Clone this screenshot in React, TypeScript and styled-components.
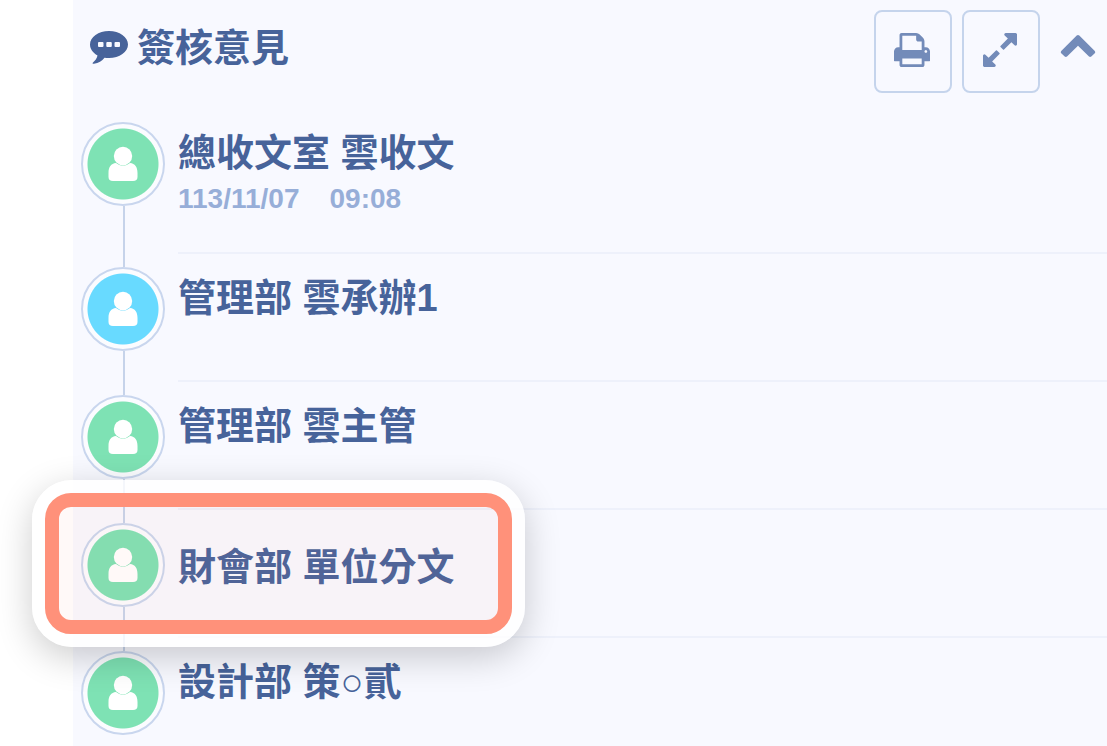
import React from "react";
import styled, { createGlobalStyle } from "styled-components";

const GlobalStyle = createGlobalStyle`
  * { box-sizing: border-box; }
  body {
    margin: 0;
    background: #fff;
    color: #47639a;
    font-family: "Liberation Sans", "Noto Sans CJK TC", sans-serif;
  }
  #root { overflow: hidden; }
`;

const Panel = styled.main`
  margin-left: 73px;
  min-height: 100vh;
  background: #f8f9ff;
`;

const Header = styled.header`
  display: flex;
  align-items: flex-start;
  justify-content: space-between;
  height: 109px;
  padding: 10px 11px 0 16px;
`;

const Title = styled.h1`
  display: flex;
  align-items: center;
  gap: 8px;
  margin: 15px 0 0;
  font-size: 38px;
  line-height: 46px;
  font-weight: 700;
`;

const Actions = styled.div`
  display: flex;
  gap: 10px;
  color: #738bb9;
`;

const IconButton = styled.button`
  display: flex;
  align-items: center;
  justify-content: center;
  width: 78px;
  height: 83px;
  padding: 0 2px 4px 0;
  border: 2px solid #c5d4ec;
  border-radius: 8px;
  background: transparent;
  color: inherit;
`;

const CollapseButton = styled.button`
  display: flex;
  justify-content: center;
  width: 36px;
  height: 74px;
  padding: 24px 0 0;
  margin-left: 10px;
  border: 0;
  background: transparent;
  color: inherit;
`;

const Timeline = styled.ol`
  margin: 0;
  padding: 0 0 0 8px;
  list-style: none;
`;

const Entry = styled.li<{ $tall?: boolean }>`
  position: relative;
  display: flex;
  gap: 13px;
  height: ${(p) => (p.$tall ? 145 : 128)}px;
`;

const Track = styled.div`
  display: flex;
  flex: none;
  flex-direction: column;
  align-items: center;
  width: 84px;
`;

const Connector = styled.span<{ $visible: boolean; $grow?: boolean }>`
  flex: ${(p) => (p.$grow ? "1" : "0 0 13px")};
  width: 2px;
  margin-left: 2px;
  background: ${(p) => (p.$visible ? "#c6d3ea" : "transparent")};
`;

const Avatar = styled.span<{ $color: string }>`
  display: flex;
  flex: none;
  align-items: center;
  justify-content: center;
  width: 84px;
  height: 84px;
  border: 2px solid #c9d6ee;
  border-radius: 50%;
  background: radial-gradient(circle, ${(p) => p.$color} 35px, #fbfcff 36px);
`;

const Details = styled.div<{ $centered?: boolean; $last?: boolean }>`
  flex: 1;
  min-width: 0;
  padding-top: ${(p) => (p.$centered ? 34 : 21)}px;
  border-bottom: 2px solid ${(p) => (p.$last ? "transparent" : "#eef1fb")};
`;

const Name = styled.h2`
  margin: 0;
  font-size: 38px;
  line-height: 46px;
  font-weight: 700;
  white-space: nowrap;
`;

const Stamp = styled.time`
  display: flex;
  gap: 30px;
  color: #97aed8;
  font-size: 28px;
  line-height: 46px;
  font-weight: 700;
`;

const Highlight = styled.div`
  position: absolute;
  z-index: 1;
  top: -30px;
  left: -49px;
  width: 493px;
  height: 167px;
  border: 13px solid rgba(255, 255, 255, 0.8);
  border-radius: 40px;
  box-shadow: 0 10px 36px rgba(0, 0, 0, 0.2);
  pointer-events: none;
`;

const HighlightFrame = styled.div`
  height: 100%;
  border: 14px solid #ff917a;
  border-radius: 26px;
  background: rgba(255, 145, 122, 0.05);
  background-clip: padding-box;
`;

const CommentIcon = () => (
  <svg width="40" height="36" viewBox="0 0 40 36" fill="currentColor" aria-hidden="true">
    <path
      fillRule="evenodd"
      d="M20 1C9.500 1 1 7 1 14.500C1 19 4 23 8.500 25.500C8 28.500 6 30.500 4 32.500C3 33.600 4 34 5 33.800C9.500 33 13 31 15.500 27.700C17 28 18.500 28 20 28C30.500 28 39 22 39 14.500S30.500 1 20 1ZM10 12h3.500q1 0 1 1v3q0 1-1 1H10q-1 0-1-1v-3q0-1 1-1ZM18.300 12h3.500q1 0 1 1v3q0 1-1 1h-3.500q-1 0-1-1v-3q0-1 1-1ZM26.500 12H30q1 0 1 1v3q0 1-1 1h-3.500q-1 0-1-1v-3q0-1 1-1Z"
    />
  </svg>
);

const PrintIcon = () => (
  <svg width="36" height="34" viewBox="0 128 1664 1536" preserveAspectRatio="none" fill="currentColor" aria-hidden="true">
    <path d="M384 1536h896v-256h-896v256zM384 896h896v-384h-160q-40 0-68-28t-28-68v-160h-640v640zM1536 960q0-26-19-45t-45-19-45 19-19 45 19 45 45 19 45-19 19-45zM1664 960v416q0 13-9.500 22.500t-22.500 9.500h-224v160q0 40-28 68t-68 28h-960q-40 0-68-28t-28-68v-160h-224q-13 0-22.500-9.500t-9.500-22.500v-416q0-79 56.500-135.500t135.500-56.500h64v-544q0-40 28-68t68-28h672q40 0 88 20t76 48l152 152q28 28 48 76t20 88v256h64q79 0 135.500 56.500t56.500 135.500z" />
  </svg>
);

const ExpandIcon = () => (
  <svg width="34" height="34" viewBox="0 128 1536 1536" fill="currentColor" aria-hidden="true">
    <path d="M755 1056q0 13-10 23l-332 332 144 144q19 19 19 45t-19 45-45 19h-448q-26 0-45-19t-19-45v-448q0-26 19-45t45-19 45 19l144 144 332-332q10-10 23-10t23 10l114 114q10 10 10 23zM1536 192v448q0 26-19 45t-45 19-45-19l-144-144-332 332q-10 10-23 10t-23-10l-114-114q-10-10-10-23t10-23l332-332-144-144q-19-19-19-45t19-45 45-19h448q26 0 45 19t19 45z" />
  </svg>
);

const ChevronIcon = () => (
  <svg width="36" height="24" viewBox="0 0 36 24" fill="currentColor" aria-hidden="true">
    <path d="M16.700 1.600Q18 .5 19.300 1.600L34.800 17Q35.800 18.200 34.800 19.300L31.300 22.600Q30.100 23.500 29 22.600L18 11.800L7 22.600Q5.900 23.500 4.700 22.600L1.200 19.300Q.2 18.200 1.200 17Z" />
  </svg>
);

const PersonIcon = () => (
  <svg width="30" height="36" viewBox="0 0 30 36" fill="#fff" aria-hidden="true">
    <circle cx="15" cy="10" r="9.200" />
    <path d="M8 17C3 17.500 .5 21 .5 27V31Q.5 35 5 35H25Q29.500 35 29.500 31V27C29.500 21 27 17.500 22 17C18 20.400 12 20.400 8 17Z" />
  </svg>
);

const GREEN = "#7ee2b4";
const BLUE = "#68daff";

interface Reviewer {
  name: string;
  color: string;
  date?: string;
  time?: string;
  highlighted?: boolean;
}

const reviewers: Reviewer[] = [
  { name: "總收文室 雲收文", color: GREEN, date: "113/11/07", time: "09:08" },
  { name: "管理部 雲承辦1", color: BLUE },
  { name: "管理部 雲主管", color: GREEN },
  { name: "財會部 單位分文", color: GREEN, highlighted: true },
  { name: "設計部 策○貳", color: GREEN },
];

export default function App() {
  return (
    <>
      <GlobalStyle />
      <Panel lang="zh-Hant">
        <Header>
          <Title>
            <CommentIcon />
            簽核意見
          </Title>
          <Actions>
            <IconButton type="button" aria-label="列印">
              <PrintIcon />
            </IconButton>
            <IconButton type="button" aria-label="展開">
              <ExpandIcon />
            </IconButton>
            <CollapseButton type="button" aria-label="收合">
              <ChevronIcon />
            </CollapseButton>
          </Actions>
        </Header>
        <Timeline>
          {reviewers.map((r, i) => {
            const last = i === reviewers.length - 1;
            return (
              <Entry key={r.name} $tall={Boolean(r.date)}>
                <Track>
                  <Connector $visible={i > 0} />
                  <Avatar $color={r.color}>
                    <PersonIcon />
                  </Avatar>
                  <Connector $visible={!last} $grow />
                </Track>
                <Details $centered={r.highlighted} $last={last}>
                  <Name>{r.name}</Name>
                  {r.date && (
                    <Stamp>
                      <span>{r.date}</span>
                      <span>{r.time}</span>
                    </Stamp>
                  )}
                </Details>
                {r.highlighted && (
                  <Highlight>
                    <HighlightFrame />
                  </Highlight>
                )}
              </Entry>
            );
          })}
        </Timeline>
      </Panel>
    </>
  );
}
